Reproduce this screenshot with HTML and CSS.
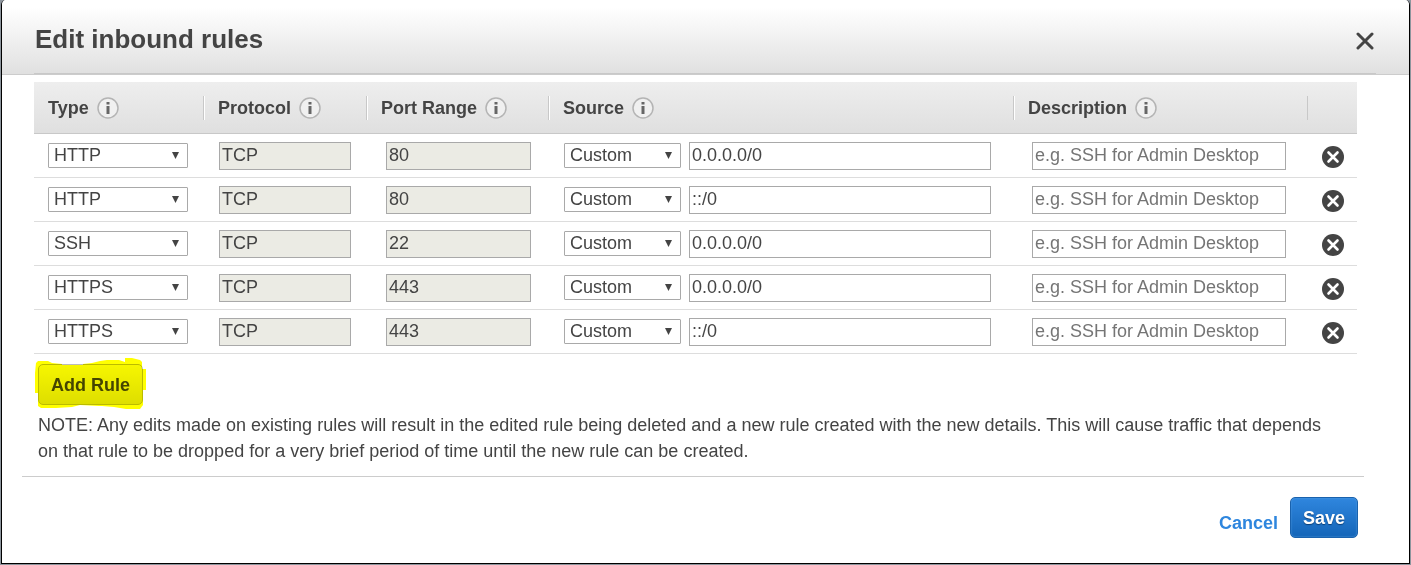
FILE: index.html
```html
<!DOCTYPE html>
<html lang="en">
<head>
<meta charset="utf-8">
<meta name="viewport" content="width=device-width, initial-scale=1">
<title>Edit inbound rules</title>
<link rel="stylesheet" href="styles.css">
</head>
<body>
<svg class="sprite" aria-hidden="true">
  <symbol id="info" viewBox="0 0 22 22">
    <circle cx="11" cy="11" r="10" fill="#f0f0f0" stroke="#b4b4b4" stroke-width="1.5"/>
    <rect x="9.5" y="5" width="3" height="2.5" fill="#666"/>
    <rect x="9.5" y="9" width="3" height="8" fill="#666"/>
  </symbol>
  <symbol id="remove" viewBox="0 0 22 22">
    <circle cx="11" cy="11" r="11" fill="#444"/>
    <path d="M6.5 6.5l9 9M15.5 6.5l-9 9" stroke="#fff" stroke-width="2.6" stroke-linecap="round"/>
  </symbol>
</svg>
<main class="dialog" role="dialog" aria-labelledby="title">
  <header class="dialog-header">
    <div class="dialog-heading">
      <h1 class="title" id="title">Edit inbound rules</h1>
      <button class="icon-button" type="button" aria-label="Close">
        <svg class="close-icon" viewBox="0 0 18 18"><path d="M2 2l14 14M16 2L2 16" fill="none" stroke="#444" stroke-width="3" stroke-linecap="round"/></svg>
      </button>
    </div>
  </header>
  <form class="dialog-body">
    <table class="rules">
      <colgroup><col class="col-type"><col class="col-protocol"><col class="col-port"><col><col class="col-description"><col class="col-remove"></colgroup>
      <thead>
        <tr>
          <th scope="col"><div class="head first">Type <svg class="icon"><use href="#info"/></svg></div></th>
          <th scope="col"><div class="head">Protocol <svg class="icon"><use href="#info"/></svg></div></th>
          <th scope="col"><div class="head">Port Range <svg class="icon"><use href="#info"/></svg></div></th>
          <th scope="col"><div class="head">Source <svg class="icon"><use href="#info"/></svg></div></th>
          <th scope="col"><div class="head">Description <svg class="icon"><use href="#info"/></svg></div></th>
          <th scope="col" aria-label="Remove"><div class="head last"></div></th>
        </tr>
      </thead>
      <tbody>
        <tr>
          <td><span class="select"><select aria-label="Type"><option>HTTP</option></select></span></td>
          <td><input class="field" aria-label="Protocol" value="TCP" disabled></td>
          <td class="wide"><input class="field" aria-label="Port range" value="80" disabled></td>
          <td><div class="source"><span class="select"><select aria-label="Source type"><option>Custom</option></select></span><input class="field" aria-label="Source" value="0.0.0.0/0"></div></td>
          <td class="wide"><input class="field" aria-label="Description" placeholder="e.g. SSH for Admin Desktop"></td>
          <td><button class="icon-button" type="button" aria-label="Remove rule"><svg class="icon"><use href="#remove"/></svg></button></td>
        </tr>
        <tr>
          <td><span class="select"><select aria-label="Type"><option>HTTP</option></select></span></td>
          <td><input class="field" aria-label="Protocol" value="TCP" disabled></td>
          <td class="wide"><input class="field" aria-label="Port range" value="80" disabled></td>
          <td><div class="source"><span class="select"><select aria-label="Source type"><option>Custom</option></select></span><input class="field" aria-label="Source" value="::/0"></div></td>
          <td class="wide"><input class="field" aria-label="Description" placeholder="e.g. SSH for Admin Desktop"></td>
          <td><button class="icon-button" type="button" aria-label="Remove rule"><svg class="icon"><use href="#remove"/></svg></button></td>
        </tr>
        <tr>
          <td><span class="select"><select aria-label="Type"><option>SSH</option></select></span></td>
          <td><input class="field" aria-label="Protocol" value="TCP" disabled></td>
          <td class="wide"><input class="field" aria-label="Port range" value="22" disabled></td>
          <td><div class="source"><span class="select"><select aria-label="Source type"><option>Custom</option></select></span><input class="field" aria-label="Source" value="0.0.0.0/0"></div></td>
          <td class="wide"><input class="field" aria-label="Description" placeholder="e.g. SSH for Admin Desktop"></td>
          <td><button class="icon-button" type="button" aria-label="Remove rule"><svg class="icon"><use href="#remove"/></svg></button></td>
        </tr>
        <tr>
          <td><span class="select"><select aria-label="Type"><option>HTTPS</option></select></span></td>
          <td><input class="field" aria-label="Protocol" value="TCP" disabled></td>
          <td class="wide"><input class="field" aria-label="Port range" value="443" disabled></td>
          <td><div class="source"><span class="select"><select aria-label="Source type"><option>Custom</option></select></span><input class="field" aria-label="Source" value="0.0.0.0/0"></div></td>
          <td class="wide"><input class="field" aria-label="Description" placeholder="e.g. SSH for Admin Desktop"></td>
          <td><button class="icon-button" type="button" aria-label="Remove rule"><svg class="icon"><use href="#remove"/></svg></button></td>
        </tr>
        <tr>
          <td><span class="select"><select aria-label="Type"><option>HTTPS</option></select></span></td>
          <td><input class="field" aria-label="Protocol" value="TCP" disabled></td>
          <td class="wide"><input class="field" aria-label="Port range" value="443" disabled></td>
          <td><div class="source"><span class="select"><select aria-label="Source type"><option>Custom</option></select></span><input class="field" aria-label="Source" value="::/0"></div></td>
          <td class="wide"><input class="field" aria-label="Description" placeholder="e.g. SSH for Admin Desktop"></td>
          <td><button class="icon-button" type="button" aria-label="Remove rule"><svg class="icon"><use href="#remove"/></svg></button></td>
        </tr>
      </tbody>
    </table>
    <div class="add">
      <button class="button add-button" type="button">Add Rule</button>
      <svg class="marker" viewBox="0 0 112 54" aria-hidden="true"><path fill="#ff0" d="M2 5L4 3H14L18 5L28 6V7H49V6L58 5L66 3L73 2H85L91 4V0H98L106 2L108 4V11H112V32H109V47L106 51H92L80 49L68 48H65L46 47L38 49L22 50H7L4 48V35H1V15Z"/></svg>
    </div>
    <p class="note">NOTE: Any edits made on existing rules will result in the edited rule being deleted and a new rule created with the new details. This will cause traffic that depends on that rule to be dropped for a very brief period of time until the new rule can be created.</p>
  </form>
  <footer class="dialog-footer">
    <a class="cancel" href="#">Cancel</a>
    <button class="button save-button" type="button">Save</button>
  </footer>
</main>
</body>
</html>
```
FILE: styles.css
```css
* { box-sizing: border-box; }

body {
  margin: 0;
  padding: 0 1px 1px;
  background: #8d959d;
  color: #444;
  font: 18px/26px "Liberation Sans", Arial, sans-serif;
}

.sprite { display: none; }

.dialog {
  background: #fff;
  border: 1px solid #000;
  border-top: 0;
  border-radius: 5px 5px 0 0;
  overflow: hidden;
}

.dialog-header {
  padding: 0 33px 0 32px;
  border-bottom: 1px solid #ccc;
  background: linear-gradient(#fff 10%, #e0e0e0);
}

.dialog-heading {
  display: flex;
  align-items: center;
  justify-content: space-between;
  height: 74px;
  padding-top: 8px;
  border-bottom: 1px solid #c8c8c8;
}

.title {
  margin: 0;
  padding: 0 0 4px 1px;
  font-size: 26px;
  line-height: 32px;
}

.icon-button {
  display: block;
  padding: 0;
  border: 0;
  background: none;
  cursor: pointer;
}

.close-icon {
  display: block;
  width: 18px;
  height: 18px;
  margin-right: 2px;
}

.icon {
  display: block;
  width: 22px;
  height: 22px;
}

.dialog-body { padding: 7px 52px 12px 32px; }

.rules {
  width: 100%;
  table-layout: fixed;
  border-collapse: separate;
  border-spacing: 0;
}

.col-type { width: 169px; }
.col-protocol { width: 163px; }
.col-port { width: 182px; }
.col-description { width: 294px; }
.col-remove { width: 50px; }

.rules thead { background: linear-gradient(#eee, #dfdfdf); }

.rules th {
  height: 52px;
  padding: 0;
  border-bottom: 1px solid #c8c8c8;
  line-height: 24px;
  text-align: left;
}

.head {
  display: flex;
  gap: 8px;
  height: 24px;
  padding-left: 14px;
  border-left: 1px solid #c8c8c8;
  box-shadow: inset 1px 0 #fff;
}

.head .icon { margin-top: 1px; }

.first {
  padding-left: 13px;
  border-left-color: transparent;
  box-shadow: none;
}

.last { box-shadow: none; }

.rules td {
  height: 44px;
  padding: 0 15px 0 16px;
  border-bottom: 1px solid #ddd;
}

.rules td:first-child { padding-left: 14px; }
.rules td.wide { padding: 0 17px 0 20px; }
.rules td.wide:nth-child(5) { padding: 0 21px 0 19px; }
.rules td:last-child { padding: 2px 0 0 15px; }

.field {
  display: block;
  width: 100%;
  height: 28px;
  padding: 0 2px;
  border: 1px solid #a9a9a9;
  border-radius: 0;
  background: #fff;
  color: #444;
  font: inherit;
}

.field:disabled { background: #ebebe4; }
.field::placeholder { color: #757575; }

.select {
  display: grid;
  align-items: center;
}

.select select {
  grid-area: 1 / 1;
  width: 100%;
  height: 25px;
  padding: 0 5px 1px;
  border: 1px solid #a9a9a9;
  border-radius: 1px;
  background: #fff;
  color: #444;
  font: inherit;
  line-height: 22px;
  appearance: none;
}

.select::after {
  content: "";
  grid-area: 1 / 1;
  justify-self: end;
  width: 7px;
  height: 7px;
  margin-right: 9px;
  background: #444;
  clip-path: polygon(0 0, 100% 0, 50% 100%);
  pointer-events: none;
}

.source {
  display: grid;
  grid-template-columns: 117px 1fr;
  align-items: center;
  gap: 8px;
  padding-right: 7px;
}

.button {
  display: block;
  height: 41px;
  padding: 0 12px;
  border-radius: 5px;
  font: bold 18px/26px "Liberation Sans", Arial, sans-serif;
  cursor: pointer;
}

.add {
  position: relative;
  display: flex;
  padding: 10px 4px 7px;
}

.add-button {
  border: 1px solid #bbb;
  background: linear-gradient(#f6f6f6, #dedede);
  color: #444;
}

.marker {
  position: absolute;
  top: 4px;
  left: 0;
  width: 112px;
  height: 54px;
  mix-blend-mode: multiply;
  pointer-events: none;
}

.note {
  margin: 0;
  padding: 0 30px 0 4px;
}

.dialog-footer {
  display: flex;
  align-items: center;
  justify-content: flex-end;
  gap: 12px;
  margin: 0 45px 0 20px;
  padding: 20px 6px 25px;
  border-top: 1px solid #ccc;
}

.cancel {
  padding-top: 10px;
  color: #2e86de;
  font-weight: bold;
  text-decoration: none;
}

.save-button {
  border: 1px solid #1a62ad;
  background: linear-gradient(#2f86de, #1465b8);
  box-shadow: inset 0 0 2px #5a9fe0;
  color: #fff;
  text-shadow: 0 1px 1px #0d3f75;
}
```
